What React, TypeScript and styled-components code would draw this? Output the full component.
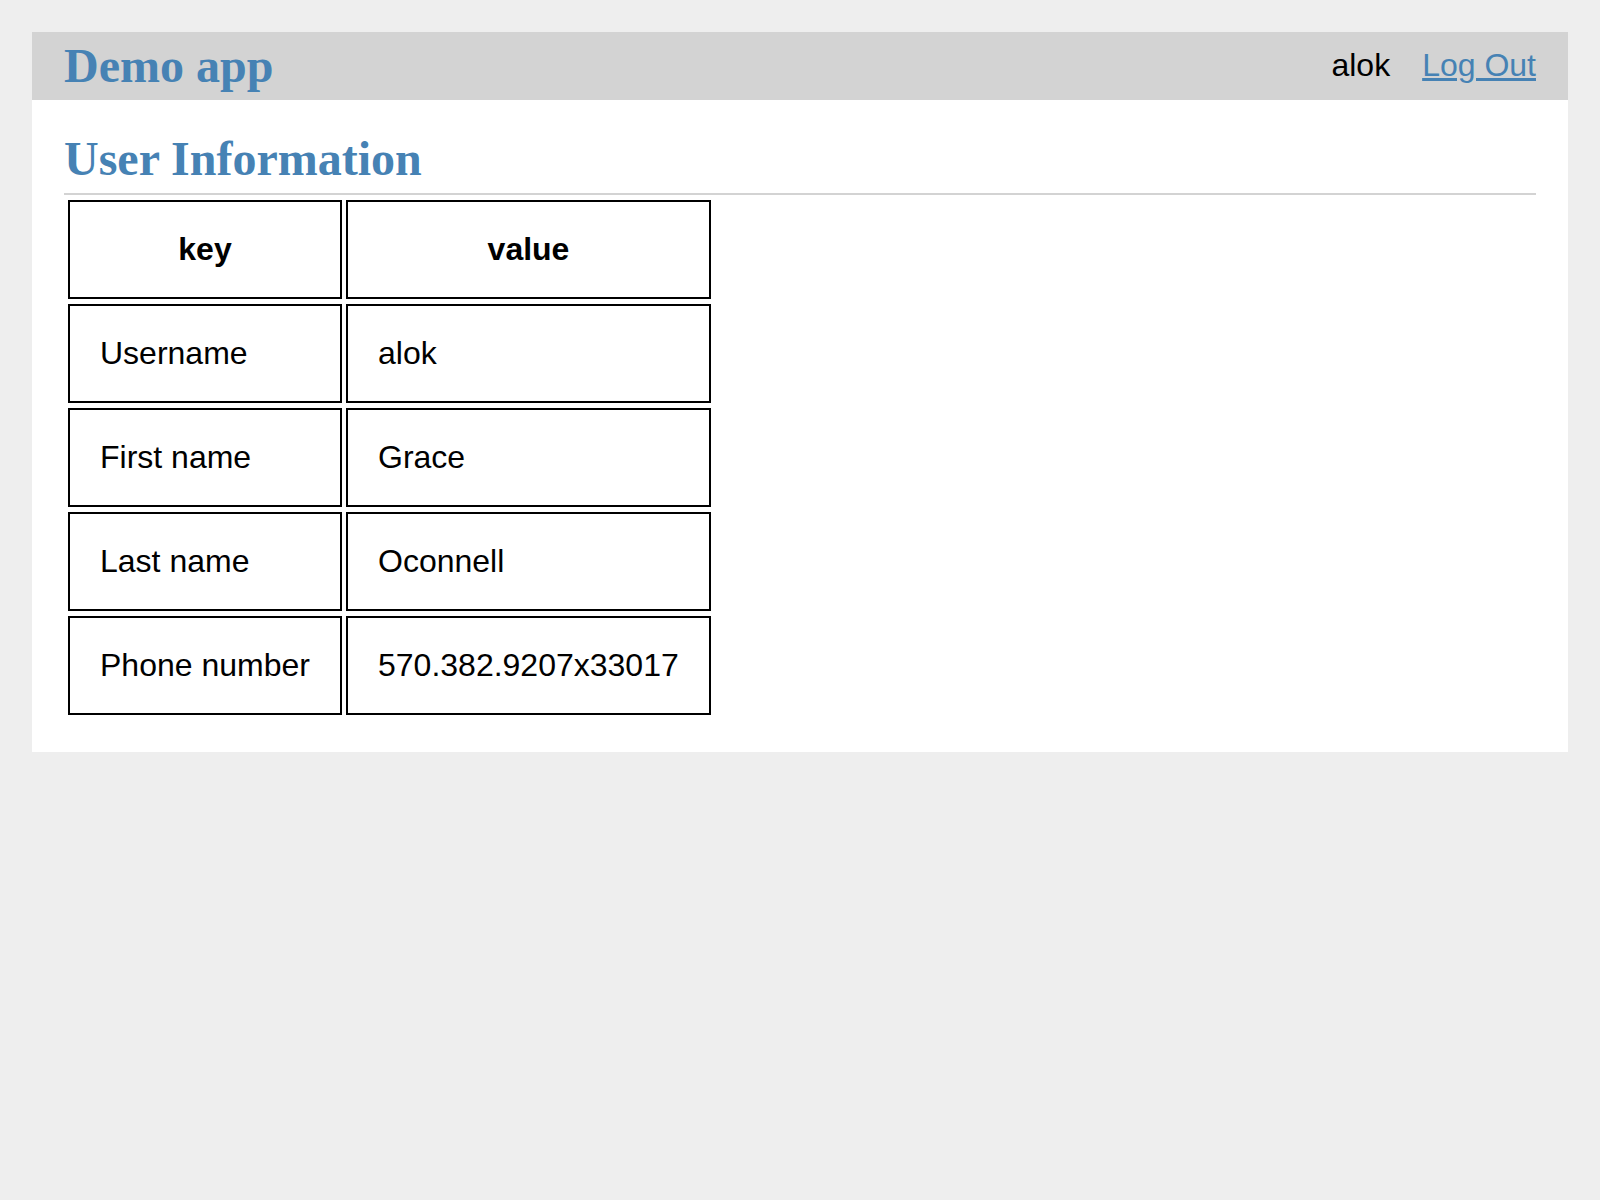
import React from "react";
import styled, { createGlobalStyle } from "styled-components";

const GlobalStyle = createGlobalStyle`
  html, body {
    margin: 0;
    padding: 0;
    background: #eeeeee;
    font-family: "Liberation Sans", Arial, Helvetica, sans-serif;
    color: #000;
  }
  * { box-sizing: border-box; }
`;

const Page = styled.div`
  padding: 32px;
`;

const Container = styled.div`
  background: #ffffff;
`;

const Header = styled.header`
  display: flex;
  align-items: center;
  justify-content: space-between;
  height: 68px;
  padding: 0 32px;
  background: #d3d3d3;
`;

const Brand = styled.h1`
  margin: 0;
  font-family: "Liberation Serif", "Times New Roman", serif;
  font-weight: bold;
  font-size: 48px;
  line-height: 54px;
  color: #4682b4;
`;

const Nav = styled.nav`
  display: flex;
  align-items: center;
  gap: 32px;
  padding-bottom: 2px;
  font-size: 32px;
  line-height: 36px;
`;

const CurrentUser = styled.span`
  color: #000;
`;

const LogOutLink = styled.a`
  color: #4682b4;
  text-decoration: underline;
  cursor: pointer;
`;

const Main = styled.main`
  padding: 32px 32px 32px;
`;

const Title = styled.h2`
  margin: 0;
  padding-bottom: 7px;
  border-bottom: 2px solid #d3d3d3;
  font-family: "Liberation Serif", "Times New Roman", serif;
  font-weight: bold;
  font-size: 48px;
  line-height: 54px;
  color: #4682b4;
`;

const Table = styled.table`
  border-collapse: separate;
  border-spacing: 4px 5px;
  table-layout: fixed;
  width: 651px;
  font-size: 32px;
`;

const Cell = styled.td<{ $head?: boolean; $w: number }>`
  width: ${(p) => p.$w}px;
  border: 2px solid #000;
  padding: 30px 30px;
  line-height: 35px;
  white-space: nowrap;
  text-align: ${(p) => (p.$head ? "center" : "left")};
  font-weight: ${(p) => (p.$head ? "bold" : "normal")};
`;

const rows: [string, string][] = [
  ["Username", "alok"],
  ["First name", "Grace"],
  ["Last name", "Oconnell"],
  ["Phone number", "570.382.9207x33017"],
];

export default function App() {
  return (
    <>
      <GlobalStyle />
      <Page>
        <Container>
          <Header>
            <Brand>Demo app</Brand>
            <Nav>
              <CurrentUser>alok</CurrentUser>
              <LogOutLink href="#">Log Out</LogOutLink>
            </Nav>
          </Header>
          <Main>
            <Title>User Information</Title>
            <Table>
              <thead>
                <tr>
                  <Cell as="th" $head $w={274}>key</Cell>
                  <Cell as="th" $head $w={365}>value</Cell>
                </tr>
              </thead>
              <tbody>
                {rows.map(([k, v]) => (
                  <tr key={k}>
                    <Cell $w={274}>{k}</Cell>
                    <Cell $w={365}>{v}</Cell>
                  </tr>
                ))}
              </tbody>
            </Table>
          </Main>
        </Container>
      </Page>
    </>
  );
}
